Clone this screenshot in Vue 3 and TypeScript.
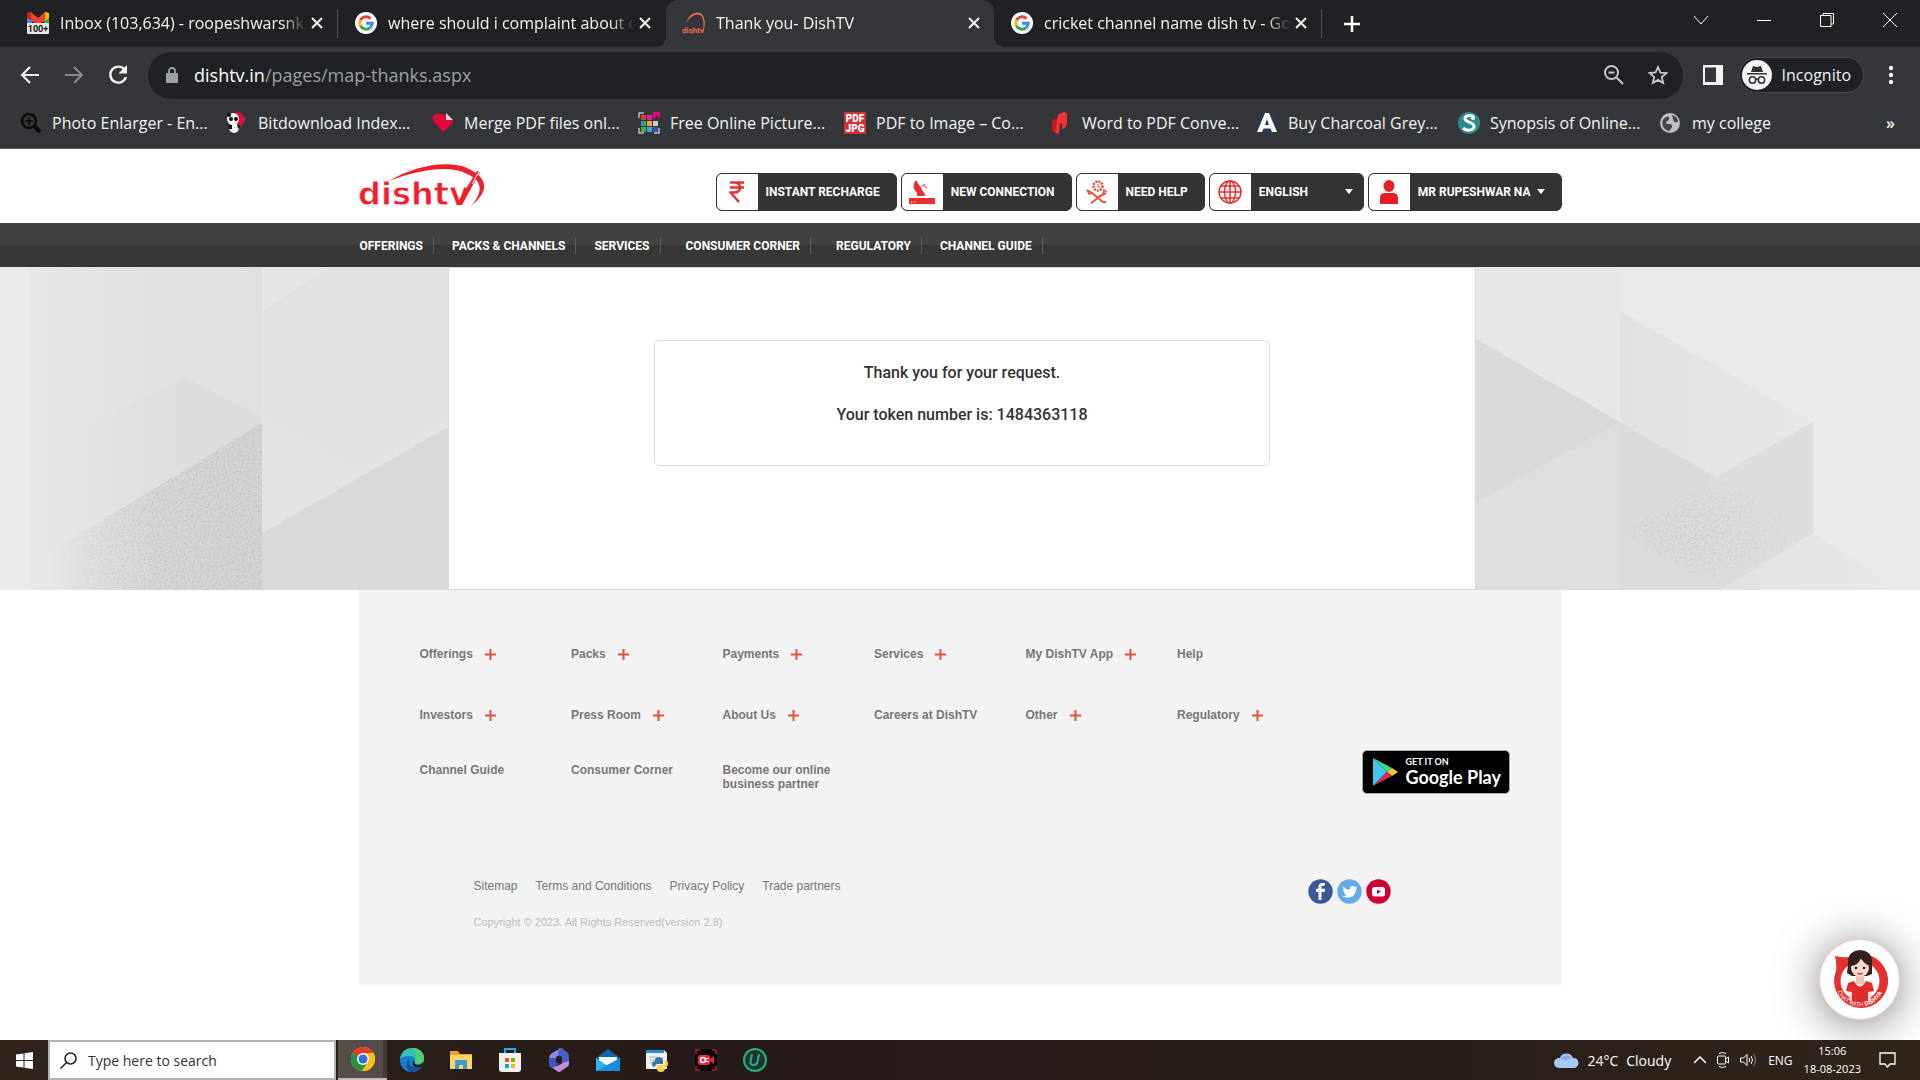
<script setup lang="ts">
import { ref } from 'vue'

interface Glyph { icon: string }
interface Tab extends Glyph { title: string; active?: boolean }
interface Bookmark extends Glyph { label: string }
interface FooterLink { label: string; expandable?: boolean }

const google =
  '<circle cx="11" cy="11" r="11" fill="#fff"/><g fill="none" stroke-width="3"><path d="M15.4 6.6A6.2 6.2 0 0 0 5.5 8.2" stroke="#ea4335"/><path d="M5.5 8.2a6.2 6.2 0 0 0 0 5.6" stroke="#fbbc05"/><path d="M5.5 13.8a6.2 6.2 0 0 0 9.6 1.8" stroke="#34a853"/><path d="M11 11.2h6.2a6.2 6.2 0 0 1-2.1 4.4" stroke="#4285f4"/></g>'

const tabs: Tab[] = [
  {
    title: 'Inbox (103,634) - roopeshwarsnk',
    icon: '<path d="M0 2h5v10H0z" fill="#4285f4"/><path d="M17 2h5v10h-5z" fill="#34a853"/><path d="M0 1l4-1 7 6 7-6 4 1v5l-11 7L0 6z" fill="#ea4335"/><path d="M18 0l4 1v5l-4 3z" fill="#fbbc04"/><path d="M0 1l4-1v8L0 6z" fill="#c5221f"/><rect y="11" width="22" height="11" rx="1" fill="#e8e8e8"/><text x="11" y="20" font-family="Roboto" font-weight="700" font-size="9" text-anchor="middle" fill="#111">100+</text>'
  },
  { title: 'where should i complaint about d', icon: google },
  {
    title: 'Thank you- DishTV',
    active: true,
    icon: '<path d="M3 11C6 1 17-3 20 4c3 5 2 12-1 18 2-7 2-13 0-17-3-5-11-2-16 6z" fill="#f26b4e"/><text x="10" y="21" font-family="Roboto" font-weight="700" font-size="8" text-anchor="middle" fill="#f26b4e">dishtv</text>'
  },
  { title: 'cricket channel name dish tv - Go', icon: google }
]

const bookmarks: Bookmark[] = [
  {
    label: 'Photo Enlarger - En...',
    icon: '<g fill="none" stroke="#0b0b0c"><circle cx="9" cy="9" r="7" stroke-width="2.5"/><path d="M14 14l6 6" stroke-width="4"/><path d="M9 5v8M5 9h8" stroke-width="1.5"/></g>'
  },
  {
    label: 'Bitdownload Index...',
    icon: '<path d="M6 2l6-2 4 2 4 5-4 7-7-2z" fill="#d8133a"/><circle cx="7" cy="7" r="6" fill="#f4f4f4"/><circle cx="3" cy="3" r="2" fill="#111"/><ellipse cx="5" cy="7" rx="2" ry="2" fill="#111"/><ellipse cx="10" cy="7" rx="2" ry="2" fill="#111"/><ellipse cx="8" cy="16" rx="5" ry="5" fill="#f4f4f4"/><path d="M2 13h4v4H3zM11 12l3 2-2 3z" fill="#111"/>'
  },
  {
    label: 'Merge PDF files onl...',
    icon: '<path d="M11 20L1 9C-1 3 5-1 10 3l4-1v6h7c0 3-1 4-3 6z" fill="#e5053a"/><path d="M14 1l7 7h-7z" fill="#f7d9e0"/>'
  },
  {
    label: 'Free Online Picture...',
    icon: '<path d="M1 6V1h5M1 16v5h5M16 21h5v-5" fill="none" stroke="#b9bbbf" stroke-width="1.5"/><path d="M3 3h5v5H3z" fill="#d8402b"/><path d="M9 3h5v5H9z" fill="#e0218a"/><path d="M15 0h7v6l-3-2-4 3z" fill="#e5007e"/><path d="M3 9h5v5H3z" fill="#20a39a"/><path d="M9 9h5v5H9z" fill="#f2a73b"/><path d="M15 9h5v5h-5z" fill="#c9ccd1"/><path d="M3 15h5v5H3z" fill="#4eaa3a"/><path d="M9 15h5v5H9z" fill="#3aa6dd"/><path d="M15 15h5v5h-5z" fill="#2a5ca8"/>'
  },
  {
    label: 'PDF to Image – Co...',
    icon: '<rect width="22" height="22" fill="#cf3338"/><g font-family="Roboto" font-weight="900" font-size="10" text-anchor="middle" fill="#fff"><text x="11" y="10">PDF</text><text x="11" y="20">JPG</text></g>'
  },
  {
    label: 'Word to PDF Conve...',
    icon: '<path d="M2 9q1-2 5-2v13q-4 0-5-1z" fill="#c9151b"/><path d="M7 8Q7 1 14 0l3 1v10q0 5-5 6v-5l-2-1-1 11-4-1z" fill="#f0332f"/>'
  },
  {
    label: 'Buy Charcoal Grey...',
    icon: '<circle cx="11" cy="11" r="11" fill="#2b3a4e"/><path d="M9 1h4l8 19h-5l-1.500-3.500h-7L6 20H1zM11 7l-2 6h4z" fill="#fff" fill-rule="evenodd"/>'
  },
  {
    label: 'Synopsis of Online...',
    icon: '<circle cx="11" cy="11" r="11" fill="#2b8a8e"/><path d="M16 5c-4-3-10-1-9 2 1 4 10 3 9 8-1 4-8 4-11 1" fill="none" stroke="#fff" stroke-width="3"/><circle cx="15" cy="6" r="2" fill="#fff"/>'
  },
  {
    label: 'my college',
    icon: '<circle cx="10" cy="11" r="10" fill="#bdc1c6"/><path d="M3 8c3-5 7-4 6-1S5 9 6 11s5 0 6 2-1 4-3 6c-5-1-8-6-6-11zM12 3c4 1 6 4 6 7-3 1-5-1-5-3z" fill="#45464a"/>'
  }
]

const nav = [
  { label: 'OFFERINGS' },
  { label: 'PACKS & CHANNELS' },
  { label: 'SERVICES' },
  { label: 'CONSUMER CORNER', wide: true },
  { label: 'REGULATORY', wide: true },
  { label: 'CHANNEL GUIDE' }
]

const footerLinks: FooterLink[] = [
  { label: 'Offerings', expandable: true },
  { label: 'Packs', expandable: true },
  { label: 'Payments', expandable: true },
  { label: 'Services', expandable: true },
  { label: 'My DishTV App', expandable: true },
  { label: 'Help' },
  { label: 'Investors', expandable: true },
  { label: 'Press Room', expandable: true },
  { label: 'About Us', expandable: true },
  { label: 'Careers at DishTV' },
  { label: 'Other', expandable: true },
  { label: 'Regulatory', expandable: true },
  { label: 'Channel Guide' },
  { label: 'Consumer Corner' },
  { label: 'Become our online business partner' }
]

const legal = ['Sitemap', 'Terms and Conditions', 'Privacy Policy', 'Trade partners']

const apps = [
  {
    name: 'Chrome',
    icon: '<circle cx="12" cy="12" r="12" fill="#fbc116"/><path d="M12 12L1.600 6A12 12 0 0 1 22.400 6H12z" fill="#e33b2e"/><path d="M1.600 6A12 12 0 0 0 11 24l6-9-5-3z" fill="#229342"/><path d="M22.400 6H12l5 9-6 9A12 12 0 0 0 22.400 6z" fill="#fbc116"/><circle cx="12" cy="12" r="6" fill="#fff"/><circle cx="12" cy="12" r="4.500" fill="#2f6de0"/>'
  },
  {
    name: 'Edge',
    icon: '<circle cx="12" cy="12" r="12" fill="#1b7fd0"/><path d="M0 11C1 3 7 0 12 0c8 0 12 5 12 10 0 4-3 6-7 6-3 0-3-2-2-3 1-2-1-5-5-5C5 8 1 9 0 11z" fill="#35c1b1"/><path d="M12 0c8 0 12 5 12 10 0 4-3 6-7 6-2 0-3-1-2-3 4-4 1-10-3-13z" fill="#53cf6b"/><path d="M10 10c-3 5 1 12 12 9-3 4-7 5-10 5C6 23 4 14 10 10z" fill="#10539e"/><path d="M15 13c-1 2 0 4 3 4 2 0 4-1 5-3l1 3-2 2c-6 2-11-1-9-6z" fill="#291d19"/>'
  },
  {
    name: 'File Explorer',
    icon: '<path d="M1 3h8l2 3h12v15H1z" fill="#e5a51c"/><path d="M1 7h22v14H1z" fill="#ffd563"/><path d="M6 12h12v9h-4v-4h-4v4H6z" fill="#3f97dc"/>'
  },
  {
    name: 'Store',
    icon: '<path d="M7 6V1h10v5" fill="none" stroke="#22a7f0" stroke-width="2"/><path d="M1 5h22v16a3 3 0 0 1-3 3H4a3 3 0 0 1-3-3z" fill="#f2f2f2"/><path d="M7 10h4v4H7z" fill="#f25022"/><path d="M13 10h4v4h-4z" fill="#7fba00"/><path d="M7 16h4v4H7z" fill="#00a4ef"/><path d="M13 16h4v4h-4z" fill="#ffb900"/>'
  },
  {
    name: 'Microsoft 365',
    icon: '<path d="M14 0L5 5Q2 7 2 10v7l7 3V10q0-2 5-3z" fill="#8f86ea"/><path d="M12 0q3-1 5 2l4 3q1 1 1 4v6l-7 2V9l-4-3z" fill="#4a5fc9"/><path d="M22 13v3q0 2-2 3l-6 4q-2 2-4 0l-6-4 6-1 8-4z" fill="#c58ae6"/><path d="M2 10v7q1 4 5 2l5-3-3-2v-4z" fill="#3f58b8"/><path d="M9 10l4-2 2 2v4l-3 2-3-2z" fill="#2a1f1d"/>'
  },
  {
    name: 'Mail',
    icon: '<path d="M0 10L12 1l12 9v12H0z" fill="#0f62ac"/><path d="M3 9h18v8H3z" fill="#fff"/><path d="M0 10l12 8 12-8v13H0z" fill="#2fb3ef"/><path d="M3 9h18l-9 7z" fill="#f5f8fb"/><path d="M0 23l24-13v13z" fill="#198ede"/>'
  },
  {
    name: 'Python',
    icon: '<path d="M1 2h18l3 3v16H1z" fill="#f2f2f2"/><path d="M1 2h18v3H1z" fill="#2a8bd8"/><path d="M4 9h8M4 12h6M4 15h4" stroke="#b5b5b5"/><path d="M10 17v-5q0-3 4-3t4 3v4h-5q-3 0-3 3-3 0-3-3t3-3h4" fill="#3a75ad"/><path d="M20 12q3 0 3 4 0 3-3 3h-3v1h3q0 4-4 4t-4-3v-2q0-2 3-2h5z" fill="#fcd23f"/>'
  },
  {
    name: 'Recorder',
    icon: '<rect x="1" y="1" width="22" height="22" rx="3" fill="#090606"/><path d="M2 6V2h4M18 2h4v4M22 18v4h-4M6 22H2v-4" fill="none" stroke="#b1203a" stroke-width="1.500"/><rect x="4" y="7" width="12" height="10" rx="2" fill="#ee2342"/><path d="M16 11l4-3v8l-4-3z" fill="#ee2342"/><circle cx="9" cy="12" r="2.500" fill="none" stroke="#fff" stroke-width="1.500"/><path d="M12 11l3-1M12 13l3 1" stroke="#fff"/>'
  },
  {
    name: 'Uninstaller',
    icon: '<circle cx="12" cy="12" r="11" fill="#26323a" stroke="#1fb573" stroke-width="2"/><path d="M9 6L7.500 14c-.5 4 6 4 7 0L16 6" fill="none" stroke="#1fb573" stroke-width="2"/>'
  }
]

const language = ref('ENGLISH')
const search = ref('')
</script>

<template>
  <div class="screen">
    <header class="browser">
      <div class="tabstrip">
        <div v-for="tab in tabs" :key="tab.title" class="tab" :class="{ active: tab.active }">
          <svg class="favicon" viewBox="0 0 22 22" v-html="tab.icon" />
          <span class="tab-title">{{ tab.title }}</span>
          <button class="plain" aria-label="Close tab">
            <svg width="12" height="12" viewBox="0 0 12 12"><path d="M1 1l10 10M11 1L1 11" stroke="#f1f3f4" stroke-width="2" /></svg>
          </button>
        </div>
        <button class="plain new-tab" aria-label="New tab">
          <svg width="18" height="18" viewBox="0 0 18 18"><path d="M9 1v16M1 9h16" stroke="#fff" stroke-width="2.500" /></svg>
        </button>
        <div class="window-controls">
          <button class="plain" aria-label="Search tabs"><svg viewBox="0 0 14 14"><path d="M0 3l7 8 7-8" /></svg></button>
          <button class="plain" aria-label="Minimize"><svg viewBox="0 0 14 14"><path d="M0 7.500h14" /></svg></button>
          <button class="plain" aria-label="Restore"><svg viewBox="0 0 14 14"><path d="M.5 2.500h10.500v11H.5zM3 2.500v-2h10.500V11H11" /></svg></button>
          <button class="plain" aria-label="Close"><svg viewBox="0 0 14 14"><path d="M0 0l14 14M14 0L0 14" /></svg></button>
        </div>
      </div>

      <div class="toolbar">
        <div class="nav-buttons">
          <button class="plain" aria-label="Back"><svg width="20" height="20" viewBox="0 0 20 20"><path d="M19 10H2M10 2l-8 8 8 8" fill="none" stroke="#f1f3f4" stroke-width="2.200" /></svg></button>
          <button class="plain" aria-label="Forward"><svg width="20" height="20" viewBox="0 0 20 20"><path d="M1 10h17M10 2l8 8-8 8" fill="none" stroke="#85878b" stroke-width="2.200" /></svg></button>
          <button class="plain" aria-label="Reload"><svg width="20" height="20" viewBox="0 0 20 20"><path d="M16.500 4.500A8 8 0 1 0 18 12" fill="none" stroke="#f1f3f4" stroke-width="2.400" /><path d="M19 0v8.500h-8.500z" fill="#f1f3f4" /></svg></button>
        </div>
        <div class="omnibox">
          <svg width="12" height="16" viewBox="0 0 12 16"><path d="M0 6h12v10H0z" fill="#9aa0a6" /><path d="M3 7V4a3 3 0 0 1 6 0v3" fill="none" stroke="#9aa0a6" stroke-width="1.800" /></svg>
          <div class="url" role="textbox" aria-label="Address"><span class="host">dishtv.in</span>/pages/map-thanks.aspx</div>
          <button class="plain" aria-label="Zoom"><svg width="20" height="20" viewBox="0 0 20 20"><g fill="none" stroke="#c4c7cb" stroke-width="2"><circle cx="7.500" cy="7.500" r="6.500" /><path d="M12.500 12.500l6.500 6.500M4.500 7.500h6" /></g></svg></button>
          <button class="plain" aria-label="Bookmark"><svg width="20" height="20" viewBox="0 0 20 20"><path d="M10 2l2.400 5.600 6 .5-4.600 4 1.400 6-5.200-3.200L4.800 18l1.400-6-4.600-4 6-.5z" fill="none" stroke="#c4c7cb" stroke-width="1.800" /></svg></button>
        </div>
        <button class="plain" aria-label="Side panel"><svg width="20" height="20" viewBox="0 0 20 20"><rect width="20" height="20" fill="#f1f3f4" /><rect x="2" y="2.500" width="11" height="14.500" fill="#35363a" /></svg></button>
        <button class="incognito">
          <svg width="30" height="30" viewBox="0 0 30 30"><circle cx="15" cy="15" r="15" fill="#f1f3f4" /><path d="M11 6l4 1 4-1 2 6H9zM5 13h20v1.500H5z" fill="#303135" /><g fill="none" stroke="#303135" stroke-width="1.500"><circle cx="10.500" cy="20" r="3.200" /><circle cx="19.500" cy="20" r="3.200" /><path d="M13.500 19.500q1.500-1 3 0" /></g></svg>
          Incognito
        </button>
        <button class="plain" aria-label="Menu"><svg width="6" height="20" viewBox="0 0 6 20" fill="#f1f3f4"><circle cx="3" cy="3" r="2.200" /><circle cx="3" cy="10" r="2.200" /><circle cx="3" cy="17" r="2.200" /></svg></button>
      </div>

      <nav class="bookmarks" aria-label="Bookmarks">
        <a v-for="mark in bookmarks" :key="mark.label" href="#" class="bookmark">
          <svg class="favicon" viewBox="0 0 22 22" v-html="mark.icon" />
          <span>{{ mark.label }}</span>
        </a>
        <button class="plain more" aria-label="More bookmarks">»</button>
      </nav>
    </header>

    <div class="page">
      <header class="site-header container">
        <a href="#" class="logo" aria-label="dishtv home">
          <svg width="128" height="48" viewBox="0 0 128 48" fill="#f0202a">
            <text x="-1" y="45" font-family="DejaVu Sans" font-weight="700" font-size="32" stroke="#fff" stroke-width=".8">dishtv</text>
            <path d="M30 21C56 5 90 0 108 8c20 9 24 22 4 38 13-15 11-26-4-32C92 5 62 9 30 21z" />
            <path d="M97 45l21-34 3 1-18 33z" />
            <path d="M113 24l8-14" stroke="#fff" stroke-width="1" />
          </svg>
        </a>
        <div class="actions">
          <button class="action">
            <span class="action-icon"><svg width="16" height="22" viewBox="0 0 16 22"><path d="M1 1.500h14M1 6.500h14M1 1.500h5q5 0 5 5t-6 5H1.500L10 21" fill="none" stroke="#e53030" stroke-width="2.400" /></svg></span>
            <span class="action-label">INSTANT RECHARGE</span>
          </button>
          <button class="action">
            <span class="action-icon"><svg width="26" height="24" viewBox="0 0 26 24" fill="#e53030"><path d="M7 0C2 6 5 15 17 16z" /><path d="M11 8l5-4M14 5l4 3" stroke="#e53030" /><path d="M8 13h6v3H8zM0 18h26v6H0z" /><path d="M2 22h6" stroke="#fff" stroke-dasharray="1 1" /></svg></span>
            <span class="action-label">NEW CONNECTION</span>
          </button>
          <button class="action">
            <span class="action-icon"><svg width="22" height="24" viewBox="0 0 22 24" fill="none" stroke="#e8503a"><circle cx="12" cy="6" r="4.500" stroke-width="2.500" stroke-dasharray="2 1" /><path d="M12 4v3h2" /><path d="M1 10l5 3 11 9 3 0M20 13l-6 3-6 5-3 2" stroke-width="2" /><path d="M1 10l2 4 4-1M21 12l-3-2-1 4" stroke-width="1.500" /></svg></span>
            <span class="action-label">NEED HELP</span>
          </button>
          <label class="action" for="language">
            <span class="action-icon"><svg width="24" height="24" viewBox="0 0 24 24" fill="none" stroke="#e53030" stroke-width="1.500"><circle cx="12" cy="12" r="11" /><ellipse cx="12" cy="12" rx="5.500" ry="11" /><path d="M12 1v22M1 12h22M3 6h18M3 18h18" /></svg></span>
            <select id="language" v-model="language" aria-label="Language">
              <option>ENGLISH</option>
              <option>HINDI</option>
            </select>
            <svg class="caret" width="8" height="5" viewBox="0 0 8 5"><path d="M0 0h8L4 5z" fill="#fff" /></svg>
          </label>
          <button class="action">
            <span class="action-icon"><svg width="18" height="24" viewBox="0 0 18 24" fill="#e51f24"><ellipse cx="9" cy="6" rx="5.500" ry="6" /><path d="M0 24v-6q0-5 5-5h8q5 0 5 5v6z" /></svg></span>
            <span class="action-label user">MR RUPESHWAR NA</span>
            <svg class="caret" width="8" height="5" viewBox="0 0 8 5"><path d="M0 0h8L4 5z" fill="#fff" /></svg>
          </button>
        </div>
      </header>

      <nav class="site-nav" aria-label="Main">
        <div class="container nav-inner">
          <a v-for="item in nav" :key="item.label" href="#" :class="{ wide: item.wide }">{{ item.label }}</a>
        </div>
      </nav>

      <main class="hero">
        <svg class="facets" viewBox="0 0 448 323" preserveAspectRatio="none" aria-hidden="true">
          <defs>
            <linearGradient id="left-base"><stop offset="0" stop-color="#e8e8e8" /><stop offset=".5" stop-color="#e1e1e1" /><stop offset="1" stop-color="#dfdfdf" /></linearGradient>
            <linearGradient id="left-shade"><stop offset="0" stop-color="#d8d8d8" stop-opacity="0" /><stop offset="1" stop-color="#d8d8d8" stop-opacity=".5" /></linearGradient>
            <linearGradient id="left-fade"><stop offset="0" stop-color="#d8d8d8" stop-opacity="0" /><stop offset=".5" stop-color="#d8d8d8" /><stop offset="1" stop-color="#d4d4d4" /></linearGradient>
            <linearGradient id="grain-left"><stop offset="0" stop-color="#fff" stop-opacity="0" /><stop offset=".5" stop-color="#fff" /></linearGradient>
            <filter id="grain" x="0" y="0" width="1" height="1">
              <feTurbulence type="fractalNoise" baseFrequency=".5" numOctaves="2" seed="4" />
              <feColorMatrix values="0 0 0 0 .5  0 0 0 0 .5  0 0 0 0 .5  1.800 0 0 0 -.75" />
              <feComposite in2="SourceGraphic" operator="in" />
            </filter>
          </defs>
          <path d="M0 0h448v323H0z" fill="#eaeaea" />
          <path d="M30 0h232v323H30z" fill="url(#left-base)" />
          <path d="M185 110l77 40v6L50 285V180z" fill="url(#left-shade)" />
          <path d="M262 0h186v323H262z" fill="#e1e1e1" />
          <path d="M262 0h68l-68 45z" fill="#e6e6e6" />
          <path d="M262 150l100 54 86-54v10L262 266z" fill="#e3e3e3" />
          <path d="M448 160v163H262v-57z" fill="#d9d9d9" />
          <path d="M262 156v167H50v-38z" fill="url(#left-fade)" />
          <path d="M262 156v167H50v-38z" fill="url(#grain-left)" filter="url(#grain)" />
        </svg>
        <section class="panel">
          <div class="notice">
            <p>Thank you for your request.</p>
            <p>Your token number is: 1484363118</p>
          </div>
        </section>
        <svg class="facets" viewBox="0 0 444 323" preserveAspectRatio="none" aria-hidden="true">
          <defs>
            <linearGradient id="right-fade"><stop offset="0" stop-color="#dedede" /><stop offset="1" stop-color="#e9e9e9" /></linearGradient>
            <linearGradient id="top-fade"><stop offset="0" stop-color="#e1e1e1" /><stop offset="1" stop-color="#e8e8e8" /></linearGradient>
            <radialGradient id="grain-right" cx=".4" cy=".5" r=".6"><stop offset="0" stop-color="#fff" /><stop offset="1" stop-color="#fff" stop-opacity="0" /></radialGradient>
          </defs>
          <path d="M0 0h444v323H0z" fill="#e9e9e9" />
          <path d="M0 0h144v155L0 72z" fill="#e7e7e7" />
          <path d="M144 44l193 111-97 55-96-56z" fill="url(#top-fade)" />
          <path d="M0 72l144 83v168H0z" fill="#dedede" />
          <path d="M0 72l144 83L0 235z" fill="#d9d9d9" />
          <path d="M144 155l96 55-96 55z" fill="#dadada" />
          <path d="M337 155v111l-97-56z" fill="#dddddd" />
          <path d="M240 210l97 56 90 57H240l-96-58z" fill="url(#right-fade)" />
          <path d="M144 265l100 58H144z" fill="#dbdbdb" />
          <path d="M240 210l97 56-93 57-100-58z" fill="#d7d7d7" opacity=".5" />
          <path d="M240 210l97 56-93 57-100-58z" fill="url(#grain-right)" filter="url(#grain)" />
        </svg>
      </main>

      <footer class="site-footer container">
        <div class="footer-top">
          <div class="link-grid">
            <a v-for="link in footerLinks" :key="link.label" href="#">
              <span>{{ link.label }}</span>
              <svg v-if="link.expandable" width="11" height="11" viewBox="0 0 11 11"><path d="M5.500 0v11M0 5.500h11" stroke="#e2523d" stroke-width="2" /></svg>
            </a>
          </div>
          <a href="#" class="play-badge">
            <svg width="26" height="30" viewBox="0 0 26 30"><path d="M1 1v28l14-14z" fill="#3fc6f3" /><path d="M1 1l19 10-5 4z" fill="#3ddc84" /><path d="M20 11l6 4-6 4-5-4z" fill="#fbc53b" /><path d="M1 29l19-10-5-4z" fill="#e0284f" /></svg>
            <span class="badge-text"><small>GET IT ON</small><span>Google Play</span></span>
          </a>
        </div>
        <div class="footer-bottom">
          <div>
            <div class="legal"><a v-for="item in legal" :key="item" href="#">{{ item }}</a></div>
            <p class="copyright">Copyright © 2023. All Rights Reserved(version 2.8)</p>
          </div>
          <div class="social">
            <a href="#" aria-label="Facebook"><svg viewBox="0 0 25 25"><circle cx="12.500" cy="12.500" r="12.200" fill="#3b5998" /><path d="M13.500 21v-8h3l.5-3.200h-3.500V8q0-1.500 1.700-1.500H17V4h-2.500q-4 0-4 3.700v2.100H8V13h2.500v8z" fill="#fff" /></svg></a>
            <a href="#" aria-label="Twitter"><svg viewBox="0 0 25 25"><circle cx="12.500" cy="12.500" r="12.200" fill="#63ace6" /><path d="M6 7.500q3 3.300 6.500 3.400C12 7.500 15.800 6 18 8l2-.8-1 1.900 1.500-.3-1.600 1.700C19 17 12 21 5.500 17.300q2.700.2 4.300-1.300-2.300-.2-2.900-2.200h1.300Q6 12.900 5.900 10.300l1.200.4Q5.200 9 6 7.500z" fill="#fff" /></svg></a>
            <a href="#" aria-label="YouTube"><svg viewBox="0 0 25 25"><circle cx="12.500" cy="12.500" r="12.200" fill="#cc0033" /><rect x="6" y="8" width="13" height="9.500" rx="2.500" fill="#fff" /><path d="M11 10.500v4.500l4-2.250z" fill="#cc0033" /></svg></a>
          </div>
        </div>
      </footer>

      <button class="chat" aria-label="Chat with Dishya">
        <svg width="56" height="60" viewBox="0 0 56 60">
          <path d="M3 6q8 2 14 1 5-3 11-3a27 27 0 1 1-24 17q1-7-1-15z" fill="#e53030" />
          <circle cx="28" cy="31" r="19.500" fill="#fff" />
          <path d="M16 14Q15 1 28 0q13 1 12 14v10l-5 2H20l-5-3z" fill="#33201f" />
          <path d="M24 22h8v12h-8z" fill="#f3c3b0" />
          <ellipse cx="28" cy="18" rx="9" ry="9" fill="#fbdccd" />
          <path d="M18 16q8 0 11-8 3 6 9 8V8q-9-9-19-1z" fill="#33201f" />
          <circle cx="24" cy="18" r="1.300" fill="#222" /><circle cx="32" cy="18" r="1.300" fill="#222" />
          <path d="M25.500 23q2.500 2 5 0" stroke="#e53030" stroke-width="1.500" fill="none" />
          <path d="M15 40l3 11 4-1V38zM41 40l-3 11-4-1V38z" fill="#fbdccd" />
          <path d="M22 31q6 11 12 0l6 2 2 8-6 1v10H20V42l-6-1 2-8z" fill="#e02b2b" />
          <path id="chat-arc" d="M4.500 40A25 25 0 0 0 51.500 40" fill="none" />
          <text font-family="Open Sans" font-size="6" fill="#fff"><textPath href="#chat-arc" startOffset="2">CHAT WITH <tspan font-weight="700">DISHYA</tspan></textPath></text>
        </svg>
      </button>
    </div>

    <footer class="taskbar">
      <button class="plain start" aria-label="Start"><svg width="17" height="17" viewBox="0 0 17 17" fill="#fff"><path d="M0 2.500l7.500-1V8H0zM8.500 1.300L17 0v8H8.500zM0 9h7.500v6.500L0 14.500zM8.500 9H17v8l-8.500-1.300z" /></svg></button>
      <label class="search" for="search">
        <svg width="17" height="17" viewBox="0 0 17 17" fill="none" stroke="#222" stroke-width="1.500"><circle cx="10.500" cy="6.500" r="5.500" /><path d="M6.500 10.500L.5 16.500" /></svg>
        <input id="search" v-model="search" type="text" placeholder="Type here to search" />
      </label>
      <div class="apps">
        <button v-for="(app, i) in apps" :key="app.name" class="plain" :class="{ running: i === 0 }" :aria-label="app.name">
          <svg width="24" height="24" viewBox="0 0 24 24" v-html="app.icon" />
        </button>
      </div>
      <div class="tray">
        <button class="plain weather">
          <svg width="25" height="16" viewBox="0 0 25 16"><path d="M5 16a5 5 0 0 1 0-10h1a7 7 0 0 1 13 0 5 5 0 0 1 1 10z" fill="#a9c9f7" /><path d="M7 7a6 6 0 0 1 11 0q-4-2-6 2-2-2-5-2z" fill="#7ea9ee" /></svg>
          <span>24°C</span><span>Cloudy</span>
        </button>
        <svg width="12" height="8" viewBox="0 0 12 8"><path d="M0 7l6-6 6 6" fill="none" stroke="#fff" stroke-width="1.500" /></svg>
        <svg width="12" height="16" viewBox="0 0 12 16" fill="none" stroke="#fff"><rect x=".5" y="4" width="8" height="8" rx="1" /><path d="M8.500 7l3-2v6l-3-2M2 1.500q3.500-2 7 0M2 14.500q3.500 2 7 0" /></svg>
        <svg width="17" height="14" viewBox="0 0 17 14" fill="none" stroke="#fff"><path d="M.5 5h3l3.500-3.500v11L3.500 9h-3zM9 5q1.500 2 0 4M11 3q3 4 0 8" /><path d="M13.500 1q4 6 0 12" stroke="#888" /></svg>
        <span class="lang">ENG</span>
        <div class="clock"><span>15:06</span><span>18-08-2023</span></div>
        <svg class="notify" width="17" height="16" viewBox="0 0 17 16"><path d="M1 1h15v11h-5l-2.500 3L6 12H1z" fill="none" stroke="#fff" stroke-width="1.300" /></svg>
      </div>
    </footer>
  </div>
</template>

<style>
body { margin: 0; }
</style>

<style scoped>
* { box-sizing: border-box; }
a { color: inherit; text-decoration: none; }
svg { display: block; flex: none; }
button, input, select { font: inherit; color: inherit; }
.plain { display: flex; align-items: center; justify-content: center; padding: 0; border: 0; background: none; }

.screen { display: flex; flex-direction: column; min-height: 100vh; font-family: "Open Sans", sans-serif; }

/* Browser chrome */
.browser { background: #35363a; border-bottom: 1px solid #5a5b5f; color: #f1f3f4; font-size: 16px; }
.tabstrip { display: flex; height: 47px; padding-left: 10px; background: #202124; }
.tab { position: relative; display: flex; align-items: center; gap: 11px; flex: 0 1 328px; min-width: 0; padding: 0 14px 2px 17px; }
.favicon { width: 22px; height: 22px; overflow: visible; }
.tab-title { flex: 1; margin-right: -6px; overflow: hidden; white-space: nowrap; mask-image: linear-gradient(to right, #000 calc(100% - 24px), transparent); }
.tab:not(.active) { border-right: 1px solid transparent; border-image: linear-gradient(#202124 10px, #55565a 10px 37px, #202124 37px) 1; border-width: 0 1px 0 0; border-style: solid; }
.tab:has(+ .active) { border-color: transparent; border-image: none; }
.active { background: #35363a; border-radius: 12px 12px 0 0; }
.active::before, .active::after { content: ""; position: absolute; bottom: 0; width: 10px; height: 10px; }
.active::before { right: 100%; background: radial-gradient(circle at 0 0, transparent 10px, #35363a 10px); }
.active::after { left: 100%; background: radial-gradient(circle at 100% 0, transparent 10px, #35363a 10px); }
.new-tab { padding-left: 21px; }
.window-controls { display: flex; align-items: center; gap: 49px; height: 40px; margin-left: auto; padding-right: 23px; }
.window-controls svg { width: 14px; height: 14px; fill: none; stroke: #fff; stroke-width: 1; }

.toolbar { display: flex; align-items: center; gap: 20px; height: 56px; padding: 0 26px 0 20px; }
.nav-buttons { display: flex; gap: 24px; }
.omnibox { display: flex; align-items: center; flex: 1; gap: 24px; height: 47px; padding: 0 15px 0 18px; border-radius: 24px; background: #202124; font-size: 18px; color: #9aa0a6; }
.omnibox > svg { margin-right: -8px; }
.url { flex: 1; }
.host { color: #fff; }
.incognito { display: flex; align-items: center; gap: 10px; height: 36px; margin: 0 4px 0 -4px; padding: 0 12px 0 2px; border: 1px solid #46474b; border-radius: 18px; background: #202124; }
.bookmarks { display: flex; align-items: center; height: 45px; padding: 0 25px 6px 20px; }
.bookmark { display: flex; align-items: center; gap: 10px; flex: 0 1 206px; white-space: nowrap; }
.bookmark:nth-child(n + 7) { flex-basis: 202px; }
.more { margin-left: auto; font-weight: 600; }

/* Website */
.page { position: relative; flex: 1; overflow: hidden; background: #fff; font-family: Roboto, sans-serif; }
.container { max-width: 1203px; margin: 0 auto; }
.site-header { display: flex; align-items: center; justify-content: space-between; height: 74px; }
.logo { padding-bottom: 4px; }
.actions { display: flex; gap: 4px; padding-top: 11px; }
.action { display: flex; align-items: center; height: 38px; padding: 0 16px 0 0; overflow: hidden; border: 1px solid #333; border-radius: 6px; background: #333; color: #fff; font-size: 12px; font-weight: 700; }
.action-icon { display: flex; align-items: center; justify-content: center; width: 41px; height: 36px; background: #fff; }
.action-label { padding-left: 8px; }
.user { margin-right: 6px; }
select { width: 94px; padding: 0 0 0 8px; border: 0; background: transparent; appearance: none; }
label.action { padding-right: 10px; }

.site-nav { background: linear-gradient(#424242 50%, #373737 50%); }
.nav-inner { display: flex; align-items: center; height: 44px; padding: 1px 0 0 1px; color: #fff; font-size: 12px; font-weight: 700; }
.nav-inner a { padding-right: 10px; border-right: 1px solid #5c5c5c; line-height: 16px; }
.nav-inner a + a { padding-left: 18px; }
.nav-inner a.wide { padding-left: 25px; }

.hero { display: grid; grid-template-columns: calc(50% - 512px) 1028px 1fr; height: 323px; }
.facets { width: 100%; height: 323px; }
.panel { padding: 72px 205px; border: 1px solid #d9d9d9; background: #fff; }
.notice { display: flex; flex-direction: column; gap: 22px; height: 126px; padding-top: 22px; border: 1px solid #ddd; border-radius: 5px; color: #333; font-size: 16px; font-weight: 500; line-height: 20px; text-align: center; }
.notice p { margin: 0; }

.site-footer { padding-bottom: 56px; background: #f3f3f3; color: #777; font-family: "Liberation Sans", sans-serif; font-size: 12px; line-height: 14px; }
.footer-top { display: flex; justify-content: space-between; padding: 57px 52px 0 61px; }
.link-grid { display: grid; grid-template-columns: repeat(6, 1fr); grid-template-rows: 61px 55px auto; flex: 0 1 909px; font-weight: 700; }
.link-grid a { display: flex; align-items: flex-start; gap: 12px; }
.link-grid a span { max-width: 120px; }
.link-grid a svg { margin-top: 2px; }
.play-badge { display: flex; align-items: center; gap: 8px; width: 148px; height: 44px; margin-top: 103px; padding-left: 9px; border: 1px solid #a6a6a6; border-radius: 5px; background: #000; color: #fff; font-family: Lato, sans-serif; font-weight: 700; }
.badge-text { display: flex; flex-direction: column; font-size: 18px; line-height: 20px; white-space: nowrap; }
.badge-text small { font-size: 9px; line-height: 10px; }
.footer-bottom { display: flex; justify-content: space-between; padding: 85px 171px 0 115px; }
.legal { display: flex; gap: 18px; }
.copyright { margin: 22px 0 0; color: #bbb; font-size: 11px; }
.social { display: flex; gap: 4px; }
.social svg { width: 25px; height: 25px; }

.chat { position: absolute; right: 20px; bottom: 20px; display: flex; align-items: center; justify-content: center; width: 81px; height: 81px; padding: 0; border: 1px solid #f7c9c4; border-radius: 50%; background: #fff; box-shadow: 0 4px 44px rgba(0, 0, 0, .5); }

/* Taskbar */
.taskbar { display: flex; align-items: center; height: 40px; background: linear-gradient(to right, #30231c, #271b19 35%, #271d19 70%, #30251a); color: #fff; font-size: 14px; }
.start { width: 48px; height: 40px; }
.search { display: flex; align-items: center; gap: 11px; width: 288px; height: 40px; padding-left: 10px; border: 2px solid #b3b3b3; background: #fff; }
.search input { flex: 1; min-width: 0; padding: 0; border: 0; outline: 0; background: none; color: #333; }
.search input::placeholder { color: #333; opacity: 1; }
.apps { display: flex; margin-left: 2px; }
.apps button { width: 49px; height: 40px; }
.apps .running { background: linear-gradient(to right, #554c49 45px, #443a37 45px); border-bottom: 2px solid #c4bfbd; }
.tray { display: flex; align-items: center; gap: 11px; margin-left: auto; padding-right: 24px; }
.weather { gap: 8px; margin-right: 12px; }
.lang { font-size: 12px; }
.clock { display: flex; flex-direction: column; align-items: center; font-size: 11px; line-height: 18px; }
.notify { margin-left: 7px; }
</style>
